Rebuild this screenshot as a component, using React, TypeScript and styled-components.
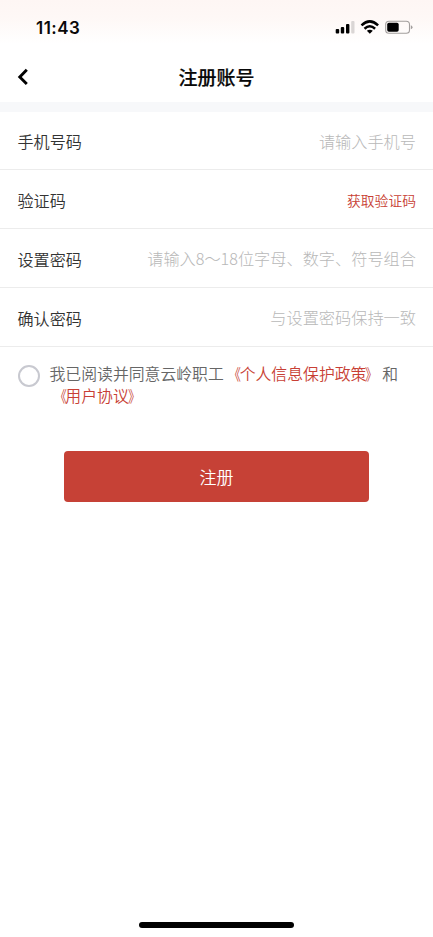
import React from 'react';
import styled, { createGlobalStyle } from 'styled-components';

const GlobalStyle = createGlobalStyle`
  *, *::before, *::after { box-sizing: border-box; }
  html, body { margin: 0; padding: 0; background: #fff; }
  body { font-family: "Noto Sans CJK SC", sans-serif; overflow: hidden; }
  button, input { font-family: inherit; }
`;

const Screen = styled.main`
  display: flex;
  flex-direction: column;
  width: 100%;
  height: 937px;
  background: linear-gradient(#fef6f4 0, #fef8f6 18px, #fff 44px);
`;

const StatusBar = styled.div`
  display: flex;
  align-items: center;
  justify-content: space-between;
  height: 52px;
  padding: 3px 20px 0 36px;
`;

const Clock = styled.time`
  font: 600 17px/20px Inter, sans-serif;
  letter-spacing: 0.45px;
  color: #0a0808;
`;

const StatusIcons = styled.svg`
  display: block;
  width: 78px;
  height: 14px;
  margin-top: -1px;
`;

const NavBar = styled.header`
  display: grid;
  grid-template-columns: 60px 1fr 60px;
  align-items: center;
  height: 50px;
`;

const BackButton = styled.button`
  display: flex;
  align-items: center;
  height: 50px;
  padding: 0 0 1px 17px;
  border: 0;
  background: none;
`;

const Title = styled.h1`
  margin: 0;
  padding-bottom: 1px;
  font-size: 19px;
  font-weight: 500;
  -webkit-text-stroke: 0.2px #080808;
  line-height: 28px;
  text-align: center;
  color: #080808;
`;

const Form = styled.form`
  display: flex;
  flex-direction: column;
  border-top: 10px solid #f7f8fa;
`;

const Field = styled.label<{ $first?: boolean }>`
  display: flex;
  align-items: center;
  height: ${({ $first }) => ($first ? 58 : 59)}px;
  padding: 0 17px 0 17.5px;
  border-bottom: 1px solid #ececec;
`;

const FieldName = styled.span`
  flex: none;
  padding-top: 1px;
  font-size: 16.1px;
  font-weight: 350;
  line-height: 24px;
  color: #333;
`;

const FieldInput = styled.input`
  flex: 1;
  min-width: 0;
  height: 24px;
  padding: 0;
  border: 0;
  outline: 0;
  background: none;
  font-size: 16.2px;
  font-weight: 300;
  text-align: right;
  color: #333;
  &::placeholder { color: #b8b8b8; opacity: 1; }
`;

const CodeButton = styled.button`
  padding: 1px 0 0;
  border: 0;
  background: none;
  font-size: 13.8px;
  font-weight: 350;
  line-height: 20px;
  color: #c83f35;
`;

const Agreement = styled.div`
  display: flex;
  align-items: flex-start;
  padding: 16px 17px 0 17.5px;
`;

const Radio = styled.button`
  flex: none;
  width: 22.5px;
  height: 22.5px;
  margin: 1.5px 9.5px 0 0;
  padding: 0;
  border: 2px solid #c8c9d0;
  border-radius: 50%;
  background: #fff;
`;

const AgreementText = styled.p`
  margin: 0;
  font-size: 15.85px;
  font-weight: 350;
  line-height: 22px;
  color: #666;
`;

const PolicyLink = styled.span`
  color: #c83f35;
`;

const Bracket = styled.span<{ $side: 'left' | 'right' }>`
  display: inline-block;
  transform: translateX(${({ $side }) => ($side === 'left' ? 1 : -1)}px) scaleX(0.78);
  transform-origin: ${({ $side }) => ($side === 'left' ? 'right' : 'left')} center;
`;

const SubmitButton = styled.button`
  align-self: center;
  width: 305px;
  height: 51px;
  margin-top: 44px;
  padding: 0;
  border: 0;
  border-radius: 4px;
  background: #c64136;
  font-size: 17px;
  font-weight: 350;
  color: #fff;
`;

const HomeIndicator = styled.div`
  align-self: center;
  width: 155px;
  height: 6px;
  margin-top: auto;
  margin-bottom: 9px;
  border-radius: 3px;
  background: #000;
`;

function DeviceStatus() {
  return (
    <StatusIcons viewBox="0 0 78 14" aria-hidden="true">
      <rect x="0.7" y="9" width="3.5" height="4.6" rx="1" />
      <rect x="5.8" y="7" width="3.4" height="6.6" rx="1" />
      <rect x="11" y="4" width="3.4" height="9.6" rx="1" />
      <rect x="16.2" y="1" width="3.3" height="12.6" rx="1" fill="#dad6d5" />
      <g fill="none" stroke="#000" strokeWidth="2.5">
        <path d="M26.5 5.4Q34.8-2.6 43.1 5.4" />
        <path d="M29.5 8.7Q34.8 3.9 40.1 8.7" />
      </g>
      <path d="M31.8 10.8Q34.8 8.6 37.8 10.8L34.8 13.8Z" />
      <rect x="50.7" y="1.2" width="23.8" height="12" rx="3.3" fill="none" stroke="#a29e9d" strokeWidth="1.1" />
      <rect x="52.2" y="2.7" width="11.5" height="9" rx="1.7" />
      <path d="M75.8 5.2Q77.5 5.8 77.5 7.2T75.8 9.2Z" fill="#a29e9d" />
    </StatusIcons>
  );
}

function Policy({ name }: { name: string }) {
  return (
    <PolicyLink>
      <Bracket $side="left">《</Bracket>
      {name}
      <Bracket $side="right">》</Bracket>
    </PolicyLink>
  );
}

export default function App() {
  return (
    <>
      <GlobalStyle />
      <Screen lang="zh-CN">
        <StatusBar>
          <Clock>11:43</Clock>
          <DeviceStatus />
        </StatusBar>
        <NavBar>
          <BackButton type="button" aria-label="返回">
            <svg width="12" height="18" viewBox="0 0 12 18" fill="none" stroke="#000" strokeWidth="2.9">
              <path d="M9.8 1.8 2.8 8.9l7 7.1" />
            </svg>
          </BackButton>
          <Title>注册账号</Title>
        </NavBar>
        <Form>
          <Field $first>
            <FieldName>手机号码</FieldName>
            <FieldInput type="tel" placeholder="请输入手机号" />
          </Field>
          <Field as="div">
            <FieldName>验证码</FieldName>
            <FieldInput aria-label="验证码" />
            <CodeButton type="button">获取验证码</CodeButton>
          </Field>
          <Field>
            <FieldName>设置密码</FieldName>
            <FieldInput type="password" placeholder="请输入8～18位字母、数字、符号组合" />
          </Field>
          <Field>
            <FieldName>确认密码</FieldName>
            <FieldInput type="password" placeholder="与设置密码保持一致" />
          </Field>
          <Agreement>
            <Radio type="button" role="radio" aria-checked="false" aria-label="同意" />
            <AgreementText>
              我已阅读并同意云岭职工
              <Policy name="个人信息保护政策" />和<br />
              <Policy name="用户协议" />
            </AgreementText>
          </Agreement>
          <SubmitButton type="button">注册</SubmitButton>
        </Form>
        <HomeIndicator />
      </Screen>
    </>
  );
}
